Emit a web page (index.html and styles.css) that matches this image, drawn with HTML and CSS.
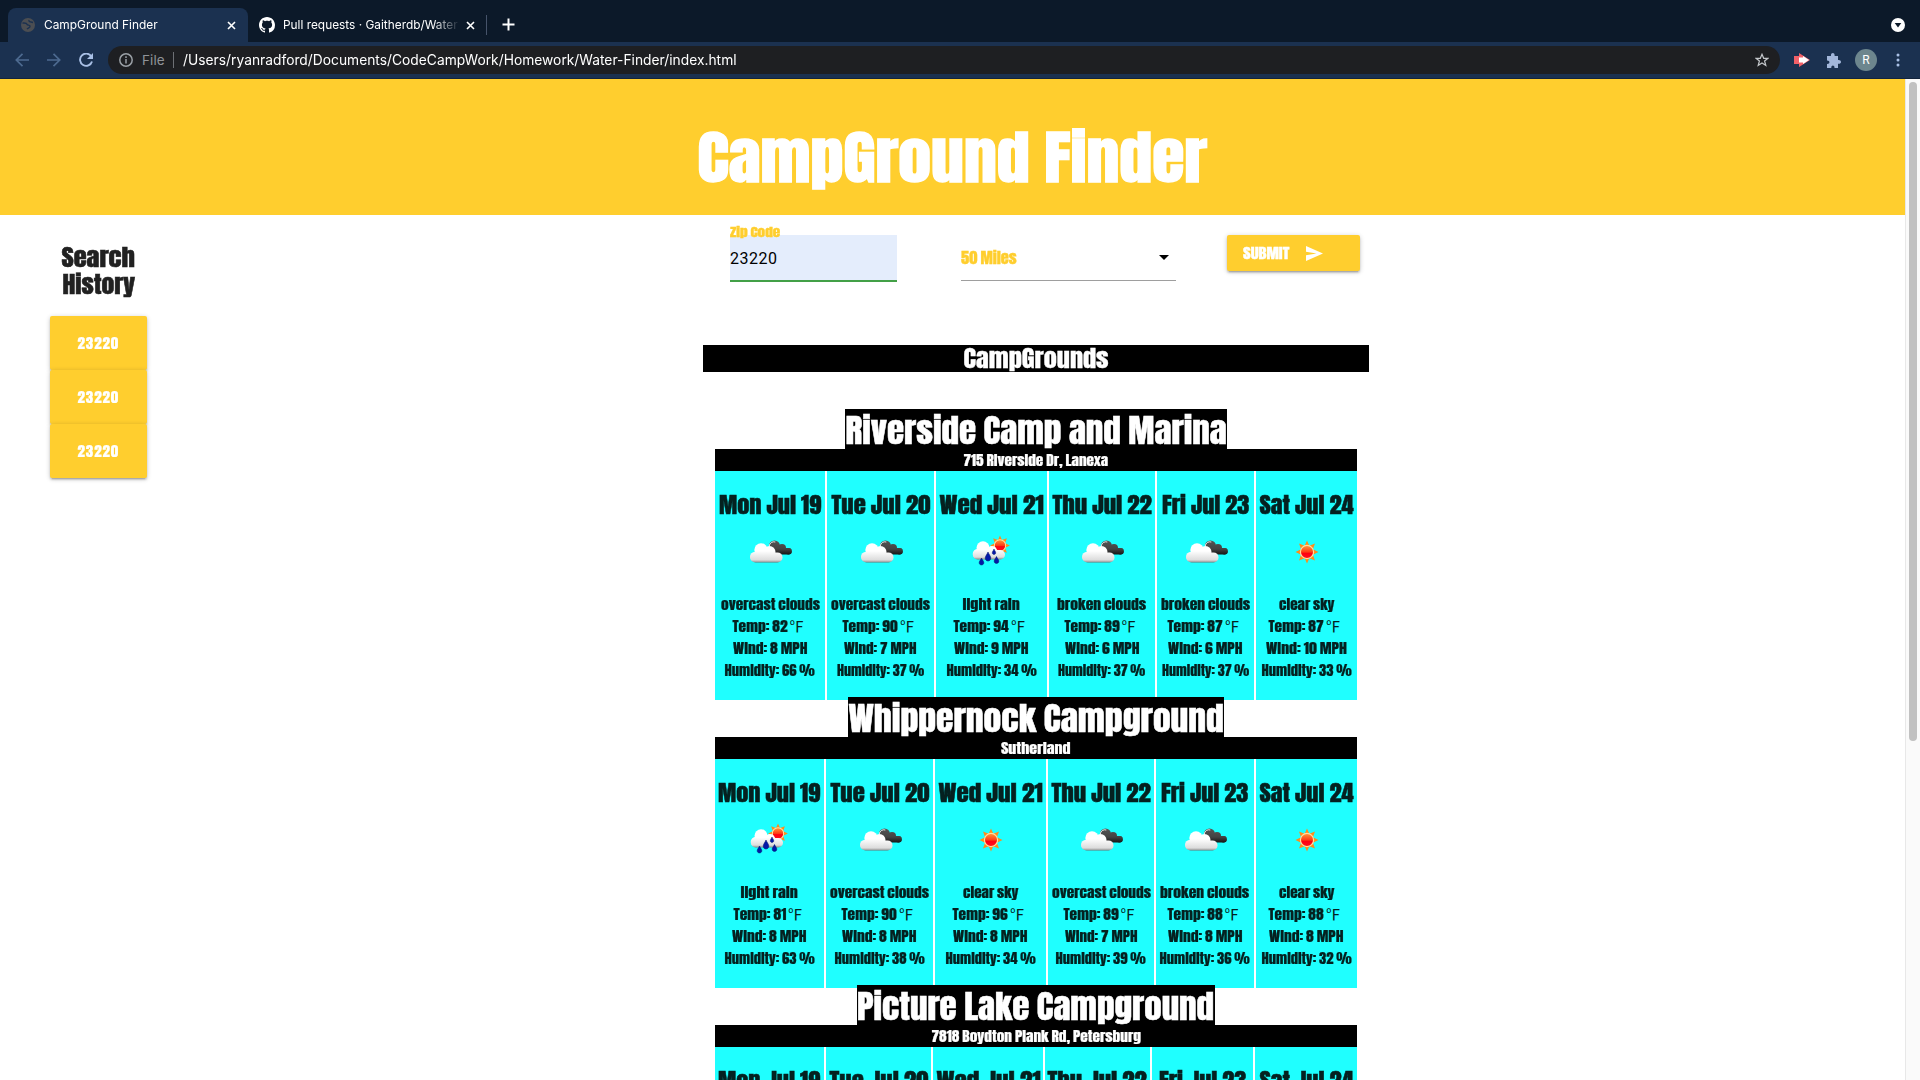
FILE: index.html
```html
<!DOCTYPE html>
<html lang="en">
<head>
<meta charset="utf-8">
<title>CampGround Finder</title>
<link rel="stylesheet" href="styles.css">
</head>
<body>
<svg width="0" height="0" class="defs">
  <defs>
    <linearGradient id="white" gradientUnits="userSpaceOnUse" x1="0" y1="14" x2="0" y2="36"><stop offset=".45" stop-color="#fff"/><stop offset=".85" stop-color="#ddd"/><stop offset=".92" stop-color="#bbb"/><stop offset="1" stop-color="#555"/></linearGradient>
    <linearGradient id="shade" gradientUnits="userSpaceOnUse" x1="0" y1="14" x2="0" y2="33"><stop offset=".45" stop-color="#fff"/><stop offset=".85" stop-color="#ddd"/><stop offset="1" stop-color="#777"/></linearGradient>
    <linearGradient id="dark" gradientUnits="userSpaceOnUse" x1="0" y1="13" x2="0" y2="28"><stop offset="0" stop-color="#555"/><stop offset=".6" stop-color="#444"/><stop offset="1" stop-color="#111"/></linearGradient>
    <linearGradient id="red" x1="0" y1="0" x2="0" y2="1"><stop offset="0" stop-color="#ff9a3c"/><stop offset=".5" stop-color="#ff3c14"/><stop offset=".6" stop-color="#ff0010"/><stop offset="1" stop-color="#ff1020"/></linearGradient>
    <symbol id="sun" viewBox="0 0 50 50">
      <path fill="#ff8c1a" d="M25 13.500l2.300 5.200 5.700-2.100-2.100 5.700 5.600 2.700-5.600 2.700 2.100 5.700-5.700-2.100L25 36.500l-2.300-5.200-5.700 2.100 2.100-5.700L13.500 25l5.600-2.700-2.100-5.700 5.700 2.100z"/>
      <circle cx="25" cy="25" r="6.600" fill="url(#red)" stroke="#ffe0a0" stroke-width="1.200"/>
    </symbol>
    <symbol id="clouds" viewBox="0 0 50 50">
      <g fill="url(#dark)"><circle cx="29.500" cy="19" r="5.500"/><circle cx="37" cy="21" r="4"/><circle cx="43.500" cy="24.300" r="3.200"/><rect x="26" y="21.100" width="20.700" height="6.400" rx="3.200"/></g>
      <path fill="none" stroke="#e8e8e8" d="M24.300 19a4.600 4.600 0 0 1 6-4"/>
      <g fill="url(#white)"><circle cx="16" cy="22.900" r="6.700"/><circle cx="24.500" cy="24.900" r="6"/><circle cx="10" cy="29.900" r="5"/><rect x="5.500" y="25.400" width="32" height="10" rx="5"/></g>
    </symbol>
    <symbol id="rain" viewBox="0 0 50 50">
      <g transform="translate(11.500 -3) scale(.86)"><use href="#sun" x="0" y="0" width="50" height="50"/></g>
      <g fill="url(#shade)"><circle cx="16" cy="20.800" r="6.500"/><circle cx="25" cy="24" r="5"/><circle cx="11" cy="27" r="5.300"/><circle cx="32" cy="27.500" r="4"/><rect x="6" y="23" width="32" height="9.500" rx="4.700"/></g>
      <g fill="#0418a8" stroke="#031068" stroke-width=".5">
        <path d="M21 25c1 2.500 2.800 4.200 2.800 6 0 4-5.600 4-5.600 0 0-1.800 1.800-3.500 2.800-6z"/>
        <path d="M14.500 31c.8 2 2.300 3 2.300 4.700 0 3-4.600 3-4.600 0 0-1.700 1.500-2.700 2.300-4.700z"/>
        <path d="M29.500 29.500c.8 2 2.300 3 2.300 4.700 0 3-4.600 3-4.600 0 0-1.700 1.500-2.700 2.300-4.700z"/>
        <path d="M27 22c.6 1.800 1.700 2.500 1.700 3.800 0 2.300-3.400 2.300-3.400 0 0-1.300 1.100-2 1.700-3.800z"/>
      </g>
    </symbol>
  </defs>
</svg>

<div class="tabstrip">
  <div class="tab tab-active">
    <svg width="14" height="14" viewBox="0 0 14 14"><circle cx="7" cy="7" r="7" fill="#4c4e52"/><path d="M1.500 5c2 .2 4-.3 4.500 1.200s2.500.3 3 1.800-1.500 1.500-3 3M8 2c-.5 2 1.500 2 4 2.500" fill="none" stroke="#1b3150" stroke-width="1.400"/></svg>
    <span class="tab-title"><span class="fit left" data-w="114">CampGround Finder</span></span>
    <svg class="close" width="9" height="9" viewBox="0 0 9 9"><path d="M1 1l7 7M8 1L1 8" stroke="#fff" stroke-width="1.600"/></svg>
  </div>
  <div class="tab tab-second">
    <svg width="16" height="16" viewBox="0 0 16 16"><path fill="#fff" d="M8 0C3.580 0 0 3.580 0 8c0 3.540 2.290 6.530 5.470 7.590.4.070.55-.17.55-.38 0-.19-.01-.82-.01-1.490-2.010.37-2.530-.49-2.690-.94-.09-.23-.48-.94-.82-1.130-.28-.15-.68-.52-.01-.53.63-.01 1.080.58 1.230.82.720 1.210 1.870.87 2.330.66.070-.52.280-.87.510-1.070-1.780-.2-3.640-.89-3.640-3.950 0-.87.310-1.590.82-2.150-.08-.2-.36-1.020.08-2.120 0 0 .67-.21 2.200.82.640-.18 1.320-.27 2-.27s1.360.09 2 .27c1.530-1.040 2.200-.82 2.200-.82.440 1.100.16 1.920.08 2.120.51.56.82 1.270.82 2.150 0 3.070-1.870 3.750-3.650 3.950.29.25.54.73.54 1.480 0 1.070-.01 1.930-.01 2.200 0 .21.15.46.55.38A8.010 8.010 0 0 0 16 8c0-4.420-3.580-8-8-8z"/></svg>
    <span class="tab-title faded"><span class="fit left" data-w="175">Pull requests · Gaitherdb/Water</span></span>
    <svg class="close" width="9" height="9" viewBox="0 0 9 9"><path d="M1 1l7 7M8 1L1 8" stroke="#fff" stroke-width="1.600"/></svg>
  </div>
  <svg class="newtab" width="13" height="13" viewBox="0 0 13 13"><path d="M6.500 .5v12M.5 6.500h12" stroke="#fff" stroke-width="2"/></svg>
  <svg class="tabsearch" width="14" height="14" viewBox="0 0 14 14"><circle cx="7" cy="7" r="7" fill="#fff"/><path d="M3.700 5h6.600L7 9.500z" fill="#0c1929"/></svg>
</div>
<div class="toolbar">
  <svg class="nav" width="14" height="14" viewBox="0 0 14 14"><path d="M14 7H1.500M7.500 .8L1.300 7l6.200 6.200" fill="none" stroke="#4d6a90" stroke-width="1.700"/></svg>
  <svg class="nav" width="14" height="14" viewBox="0 0 14 14"><path d="M0 7h12.500M6.500 .8L12.700 7l-6.200 6.200" fill="none" stroke="#4d6a90" stroke-width="1.700"/></svg>
  <svg class="nav" width="14" height="14" viewBox="0 0 14 14"><path d="M12.200 3.300A6.100 6.100 0 1 0 13 8.500" fill="none" stroke="#a9c0e6" stroke-width="1.900"/><path d="M14 0v6H8z" fill="#a9c0e6"/></svg>
  <div class="omnibox">
    <svg width="14" height="14" viewBox="0 0 14 14"><circle cx="7" cy="7" r="6.200" fill="none" stroke="#9aa0a6" stroke-width="1.500"/><path d="M7 6v4.500M7 3.200v1.700" stroke="#9aa0a6" stroke-width="1.500"/></svg>
    <span class="scheme">File</span>
    <span class="url"><span class="fit left" data-w="554">/Users/ryanradford/Documents/CodeCampWork/Homework/Water-Finder/index.html</span></span>
    <svg class="star" width="14" height="14" viewBox="0 0 14 14"><path d="M7 1.300l1.700 4h4.200L9.600 8l1.200 4.500L7 10l-3.800 2.500L4.400 8 1.100 5.300h4.200z" fill="none" stroke="#c4c7cb" stroke-width="1.200"/></svg>
  </div>
  <svg class="ext" width="16" height="14" viewBox="0 0 16 14"><path d="M0 3h5V0l11 7-11 7v-3H0z" fill="#f26068"/><path d="M5 4.500h4V3l6 4-6 4V9.500H5z" fill="#fff"/></svg>
  <svg class="puzzle" width="15" height="15" viewBox="0 0 15 15"><path fill="#a2b6da" d="M1 3h4c-.6-4 4.200-4 3.600 0H12v4c4-.5 4 4.300 0 3.800V15H8.500c.3-3.300-3.500-3.300-3.200 0H1v-4c3.200.2 3.200-3.700 0-3.500z"/></svg>
  <span class="avatar">R</span>
  <svg class="menu" width="4" height="14" viewBox="0 0 4 14" fill="#a9c0e6"><circle cx="2" cy="2" r="1.500"/><circle cx="2" cy="7" r="1.500"/><circle cx="2" cy="12" r="1.500"/></svg>
</div>

<div class="viewport">
  <div class="page">
    <header class="banner"><h1><span class="fit" data-w="510">CampGround Finder</span></h1></header>
    <div class="columns">
      <aside class="history">
        <h2><span class="fit" data-w="73">Search</span><br><span class="fit" data-w="73">History</span></h2>
        <button class="zip"><span class="fit" data-w="42">23220</span></button>
        <button class="zip"><span class="fit" data-w="42">23220</span></button>
        <button class="zip"><span class="fit" data-w="42">23220</span></button>
      </aside>
      <main>
        <form class="search">
          <div class="field"><label><span class="fit left" data-w="50">Zip Code</span></label><div class="input">23220</div></div>
          <div class="select"><span class="fit left" data-w="56">50 Miles</span><svg width="10" height="5" viewBox="0 0 10 5"><path d="M0 0h10L5 5z"/></svg></div>
          <button class="submit" type="button"><span class="fit left" data-w="46">SUBMIT</span><svg width="17" height="15" viewBox="0 0 17 15"><path fill="#fff" d="M0 0l17 7.500L0 15V9.200l10.500-1.700L0 5.800z"/></svg></button>
        </form>
        <h3 class="bar"><span class="fit" data-w="145">CampGrounds</span></h3>
        <div id="results" class="results"></div>
      </main>
    </div>
  </div>
  <div class="scroll"><div class="thumb"></div></div>
</div>
<script src="app.js"></script>
</body>
</html>
```
FILE: styles.css
```css
* { box-sizing: border-box; }
body { margin: 0; height: 1080px; overflow: hidden; background: #fff; font-family: Roboto, sans-serif; display: flex; flex-direction: column; }
.defs { position: absolute; }
svg { flex: none; display: block; }
.fit { display: inline-block; white-space: nowrap; }
.left { transform-origin: 0 50%; }

.tabstrip { height: 42px; flex: none; background: #0c1929; display: flex; align-items: flex-end; padding-left: 8px; font-size: 12px; color: #fff; }
.tab { height: 34px; display: flex; align-items: center; }
.tab-active { width: 240px; background: #1b3150; border-radius: 8px 8px 0 0; padding: 0 12px 0 13px; }
.tab-second { width: 239px; padding: 0 10px 0 11px; border-right: 1px solid #46536a; height: 20px; margin-bottom: 7px; }
.tab-title { flex: 1; width: 0; margin-left: 9px; overflow: hidden; line-height: 18px; font-family: Inter, sans-serif; }
.tab-second .tab-title { margin-left: 8px; }
.faded { -webkit-mask-image: linear-gradient(90deg, #000 150px, transparent 177px); flex: 0 0 177px; }
.tab-second .close { margin-left: 6px; }
.newtab { margin: 0 0 11px 15px; }
.tabsearch { margin: 0 15px 10px auto; }

.toolbar { height: 37px; flex: none; background: #1b3150; border-bottom: 1px solid #13243d; display: flex; align-items: center; padding-left: 15px; }
.nav { margin-right: 18px; }
.omnibox { width: 1672px; height: 28px; margin: 0 0 0 -3px; border-radius: 14px; background: #1e1f22; display: flex; align-items: center; padding: 0 11px; font: 14px Inter, sans-serif; color: #fff; }
.scheme { margin-left: 9px; width: 32px; height: 16px; line-height: 16px; border-right: 1px solid #6d7075; color: #8f9398; font-size: 13.500px; letter-spacing: .1px; }
.url { margin-left: 9px; flex: 1; padding-bottom: 1px; }
.ext { margin-left: 14px; }
.puzzle { margin-left: 16px; }
.avatar { margin-left: 14px; width: 22px; height: 22px; border-radius: 50%; background: #6d868e; color: #fff; font-size: 12px; line-height: 22px; text-align: center; }
.menu { margin-left: 19px; }

.viewport { flex: 1; display: flex; min-height: 0; }
.page { width: 1905px; overflow: hidden; font-family: Impact, Anton, "Roboto Condensed", sans-serif; word-spacing: -.04em; }
.scroll { width: 15px; background: #fafafa; border-left: 1px solid #e8e8e8; padding: 3px 3px 0; }
.thumb { width: 8px; height: 659px; border-radius: 4px; background: #c1c1c1; }

.banner { height: 136px; background: #ffce2e; padding-top: 45px; text-align: center; }
h1, h2, h3, h4 { margin: 0; font-weight: 400; }
h1 { color: #fff; font-size: 58.500px; line-height: 66px; -webkit-text-stroke: 1.300px #fff; }
.columns { display: grid; grid-template-columns: 703px 666px; }
.history { padding: 29px 0 0 50px; width: 147px; text-align: center; }
h2 { font-size: 22.500px; line-height: 27px; margin-bottom: 18px; color: #212121; -webkit-text-stroke: .5px; }
button { border: 0; padding: 0; margin: 0; background: #ffce2e; color: #fff; font: 14px Impact, Anton, "Roboto Condensed", sans-serif; border-radius: 2px; box-shadow: 0 2px 2px rgba(0,0,0,.14), 0 3px 1px -2px rgba(0,0,0,.12), 0 1px 5px rgba(0,0,0,.2); }
.zip { display: block; width: 97px; height: 54px; line-height: 54px; padding-top: 1px; letter-spacing: .8px; -webkit-text-stroke: .2px; }
.search { display: flex; height: 130px; padding-left: 27px; }
.field { width: 167px; padding-top: 5px; }
label { display: block; height: 15px; line-height: 23px; font-size: 12.500px; color: #ffce2e; position: relative; -webkit-text-stroke: .3px; }
.input { height: 47px; background: #e4edfc; border-bottom: 2px solid #43a047; color: #000; font: 16px/47px Roboto, sans-serif; letter-spacing: .5px; }
.select { width: 215px; height: 46px; margin: 20px 51px 0 64px; border-bottom: 1px solid #9e9e9e; color: #ffce2e; font-size: 15px; line-height: 46px; display: flex; align-items: center; justify-content: space-between; padding-right: 7px; -webkit-text-stroke: .3px; }
.submit { width: 133px; height: 36px; margin-top: 20px; padding: 1px 37px 0 16px; display: flex; align-items: center; justify-content: space-between; font-size: 13px; line-height: 36px; -webkit-text-stroke: .3px; }
.bar { height: 27px; line-height: 27px; background: #000; color: #fff; font-size: 22.500px; text-align: center; -webkit-text-stroke: .3px; }
.results { padding: 37px 12px 0; }
.camp { text-align: center; margin-bottom: -3px; }
.camp h4 { display: flex; justify-content: center; position: relative; margin: 0 auto; height: 40px; padding-top: 4px; line-height: 36px; background: #000; color: #fff; font-size: 31.700px; -webkit-text-stroke: .5px; }
.address { height: 22px; line-height: 23px; font-size: 13.700px; background: #000; color: #fff; -webkit-text-stroke: .2px; }
.days { display: grid; column-gap: 2px; }
.day { height: 229px; background: #1fffff; padding-top: 20px; color: #042120; font-size: 13.500px; line-height: 22px; -webkit-text-stroke: .2px; min-width: 0; }
.date { font-size: 22px; line-height: 28px; height: 27px; -webkit-text-stroke: .5px; }
.line, .date { display: flex; justify-content: center; }
.day svg { margin: 9px auto 16px; }
.unit { font: 15px "Noto Sans CJK JP", sans-serif; line-height: 22px; -webkit-text-stroke: 0; margin-left: 5px; }
```
FILE: app.js
```js
const DATES = [["Mon Jul 19", 102], ["Tue Jul 20", 99], ["Wed Jul 21", 104], ["Thu Jul 22", 99], ["Fri Jul 23", 87], ["Sat Jul 24", 94]];
const SKY = {
  "overcast clouds": ["clouds", 99],
  "broken clouds": ["clouds", 89],
  "light rain": ["rain", 57],
  "clear sky": ["sun", 56]
};
const CAMPS = [
  { name: "Riverside Camp and Marina", w: 382, address: "715 Riverside Dr, Lanexa", aw: 145, cols: [110, 107, 111, 106, 97, 101],
    days: [["overcast clouds", 82, 8, 66], ["overcast clouds", 90, 7, 37], ["light rain", 94, 9, 34], ["broken clouds", 89, 6, 37], ["broken clouds", 87, 6, 37], ["clear sky", 87, 10, 33]] },
  { name: "Whippernock Campground", w: 376, address: "Sutherland", aw: 69, cols: [109, 107, 111, 106, 98, 101],
    days: [["light rain", 81, 8, 63], ["overcast clouds", 90, 8, 38], ["clear sky", 96, 8, 34], ["overcast clouds", 89, 7, 39], ["broken clouds", 88, 8, 36], ["clear sky", 88, 8, 32]] },
  { name: "Picture Lake Campground", w: 358, address: "7818 Boydton Plank Rd, Petersburg", aw: 210, cols: [108, 105, 109, 104, 101, 101],
    days: [null, null, null, null, null, null] }
];
const fit = (text, w) => `<span class="fit" data-w="${w}">${text}</span>`;

const details = ([sky, temp, wind, hum]) => `
  <svg width="50" height="50"><use href="#${SKY[sky][0]}"/></svg>
  <div class="line">${fit(sky, SKY[sky][1])}</div>
  <div class="line">${fit("Temp: " + temp, temp === 81 ? 53 : 55)}<span class="unit">℉</span></div>
  <div class="line">${fit("Wind: " + wind + " MPH", wind === 10 ? 81 : wind === 7 ? 73 : 75)}</div>
  <div class="line">${fit("Humidity: " + hum + " %", hum === 37 ? 87 : 90)}</div>`;

document.getElementById("results").innerHTML = CAMPS.map(c => `
  <section class="camp">
    <h4 style="width:${c.w}px">${fit(c.name, c.w - 1)}</h4>
    <div class="address">${fit(c.address, c.aw)}</div>
    <div class="days" style="grid-template-columns:${c.cols.map(n => n + "fr").join(" ")}">
      ${c.days.map((day, i) => `
        <div class="day">
          <div class="date">${fit(...DATES[i])}</div>
          ${day ? details(day) : ""}
        </div>`).join("")}
    </div>
  </section>`).join("");

// Stretch each label horizontally to its display width.
document.fonts.ready.then(() => {
  document.querySelectorAll(".fit").forEach(el => {
    el.style.transform = `scaleX(${el.dataset.w / el.offsetWidth})`;
  });
});
```
